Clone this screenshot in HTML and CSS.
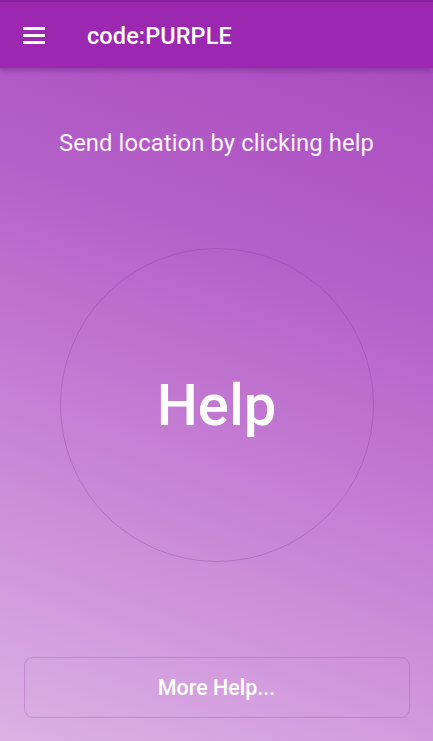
FILE: index.html
```html
<!DOCTYPE html>
<html>
<head>
<meta charset="utf-8">
<link rel="stylesheet" href="styles.css">
</head>
<body>
<div class="screen">
  <header class="appbar">
    <svg class="menu" width="22" height="18" viewBox="0 0 22 18">
      <rect x="0" y="1" width="22" height="3" fill="#fff"/>
      <rect x="0" y="8" width="22" height="3" fill="#fff"/>
      <rect x="0" y="15" width="22" height="3" fill="#fff"/>
    </svg>
    <div class="title">code:PURPLE</div>
  </header>
  <main class="content">
    <p class="hint">Send location by clicking help</p>
    <div class="circle-wrap">
      <button class="circle">Help</button>
    </div>
    <button class="more">More Help...</button>
  </main>
</div>
</body>
</html>
```

FILE: styles.css
```css
* { box-sizing: border-box; }
html, body { margin: 0; padding: 0; }
body {
  font-family: Roboto, "Noto Sans", sans-serif;
  width: 433px;
  height: 741px;
  overflow: hidden;
}
.screen {
  position: relative;
  width: 433px;
  height: 741px;
  display: flex;
  flex-direction: column;
  background: linear-gradient(200deg, #a647bd 0%, #b560c8 35%, #c884d6 65%, #dcb2e4 100%);
}
.appbar {
  position: relative;
  z-index: 2;
  height: 68px;
  flex: none;
  background: #9c27b0;
  border-top: 2px solid #8a1fa0;
  display: flex;
  align-items: center;
  padding-left: 23px;
  box-shadow: 0 2px 6px rgba(70, 0, 90, 0.35);
}
.menu { display: block; margin-top: -1px; }
.title {
  margin-left: 42px;
  margin-top: 1px;
  color: #fff;
  font-size: 23.5px;
  font-weight: 500;
  letter-spacing: 0.1px;
}
.content {
  flex: 1;
  display: flex;
  flex-direction: column;
  align-items: center;
}
.hint {
  margin: 60px 0 0;
  color: #fff4ff;
  font-size: 23.8px;
  font-weight: 400;
  line-height: 30px;
  letter-spacing: 0.1px;
}
.circle-wrap {
  margin-top: 90px;
}
.circle {
  width: 314px;
  height: 314px;
  border-radius: 50%;
  border: 1px solid rgba(120, 40, 140, 0.28);
  background: transparent;
  color: #fff;
  font-family: Roboto, "Noto Sans", sans-serif;
  font-size: 58px;
  font-weight: 500;
  padding: 0;
  display: flex;
  align-items: center;
  justify-content: center;
}
.more {
  margin-top: 95px;
  width: 386px;
  height: 61px;
  border-radius: 9px;
  border: 1px solid rgba(150, 70, 170, 0.3);
  background: transparent;
  color: #fff;
  font-family: Roboto, "Noto Sans", sans-serif;
  font-size: 21.5px;
  font-weight: 500;
  padding: 0;
}
```
